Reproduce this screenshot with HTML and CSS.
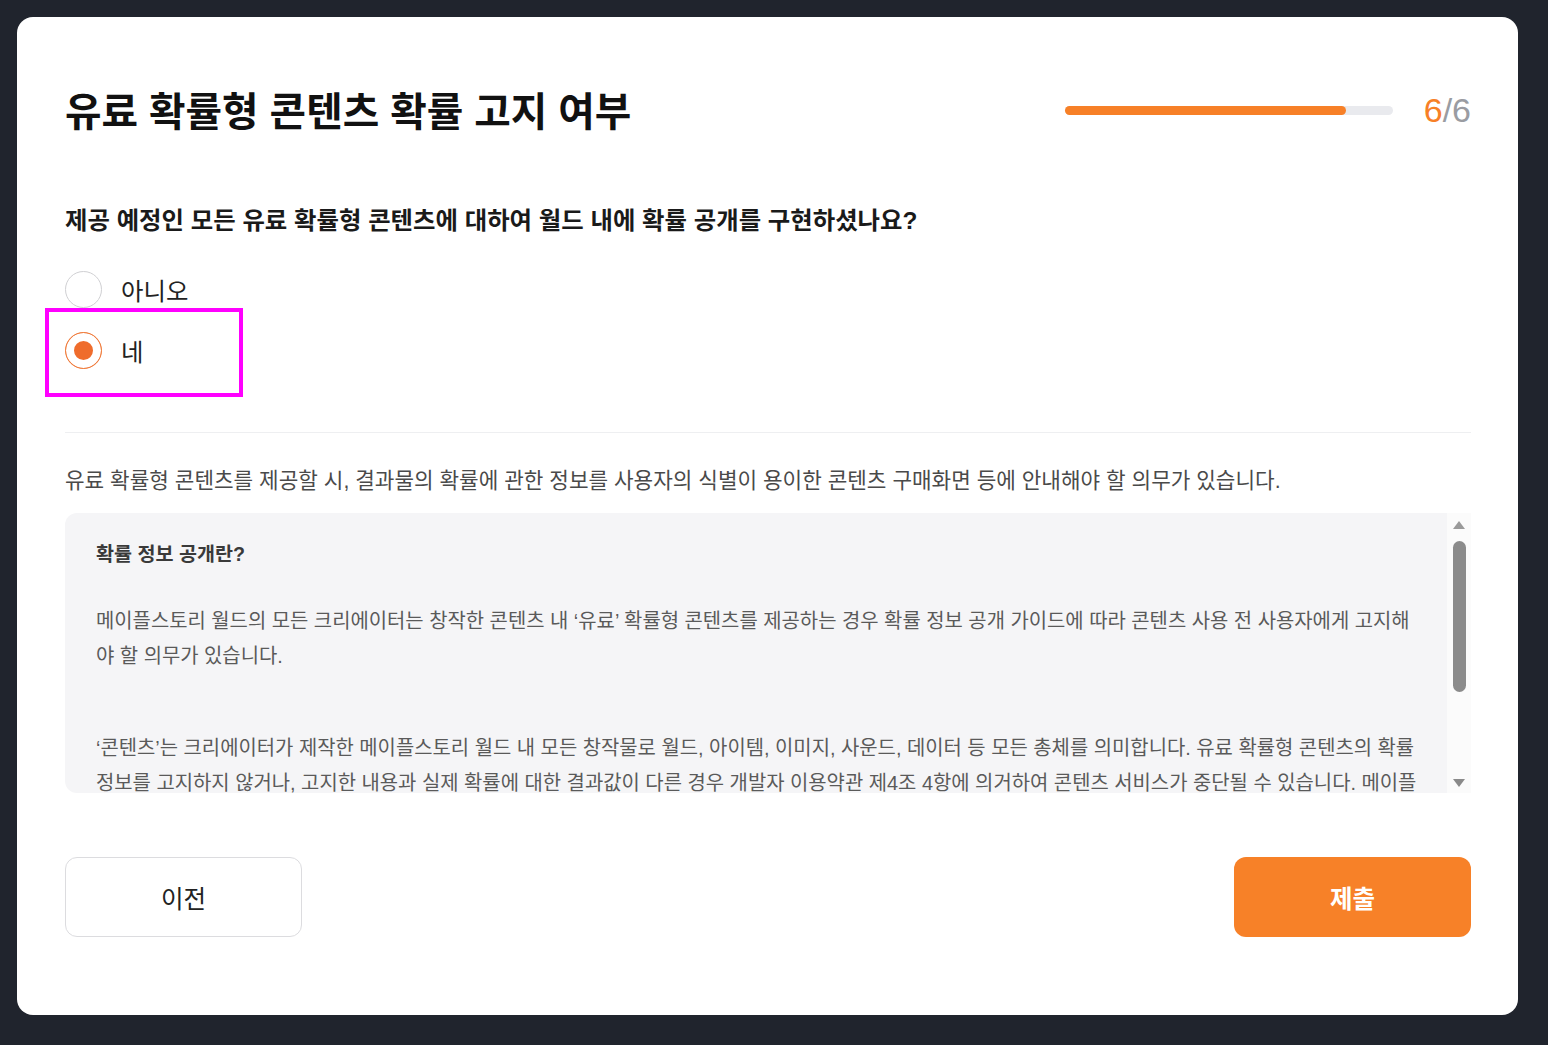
FILE: index.html
```html
<!DOCTYPE html>
<html lang="ko">

<head>
    <meta charset="UTF-8">
    <meta name="viewport" content="width=device-width, initial-scale=1.0">
    <title>유료 확률형 콘텐츠 확률 고지 여부</title>
    <link rel="stylesheet" href="styles.css">
</head>

<body>
    <!-- 설문 카드 -->
    <div class="card">
        <!-- 상단 제목 + 진행도 -->
        <div class="header">
            <h1 class="title">유료 확률형 콘텐츠 확률 고지 여부</h1>
            <div class="progress">
                <div class="progress-track">
                    <div class="progress-fill" style="width: 85.7%"></div>
                </div>
                <div class="progress-count"><span class="current">6</span>/6</div>
            </div>
        </div>

        <!-- 질문 -->
        <p class="question">제공 예정인 모든 유료 확률형 콘텐츠에 대하여 월드 내에 확률 공개를 구현하셨나요?</p>
        <div class="options">
            <label class="option">
                <input type="radio" name="notice" value="no">
                <span class="option-text">아니오</span>
            </label>
            <label class="option">
                <input type="radio" name="notice" value="yes" checked>
                <span class="option-text">네</span>
                <span class="highlight"></span>
            </label>
        </div>

        <div class="divider"></div>

        <!-- 안내 -->
        <p class="desc">유료 확률형 콘텐츠를 제공할 시, 결과물의 확률에 관한 정보를 사용자의 식별이 용이한 콘텐츠 구매화면 등에 안내해야 할 의무가 있습니다.</p>
        <div class="notice">
            <div class="notice-body">
                <h2 class="notice-title">확률 정보 공개란?</h2>
                <p class="notice-text">메이플스토리 월드의 모든 크리에이터는 창작한 콘텐츠 내 ‘유료’ 확률형 콘텐츠를 제공하는 경우 확률 정보 공개 가이드에 따라 콘텐츠 사용 전 사용자에게 고지해야 할 의무가 있습니다.</p>
                <p class="notice-text second">‘콘텐츠’는 크리에이터가 제작한 메이플스토리 월드 내 모든 창작물로 월드, 아이템, 이미지, 사운드, 데이터 등 모든 총체를 의미합니다. 유료 확률형 콘텐츠의 확률 정보를 고지하지 않거나, 고지한 내용과 실제 확률에 대한 결과값이 다른 경우 개발자 이용약관 제4조 4항에 의거하여 콘텐츠 서비스가 중단될 수 있습니다. 메이플스토리 월드 확률 정보 공개 가이드를 꼭 확인해 주세요.</p>
            </div>
            <!-- 스크롤바 -->
            <div class="scroll-rail">
                <span class="arrow-up"></span>
                <span class="thumb"></span>
                <span class="arrow-down"></span>
            </div>
        </div>

        <!-- 하단 버튼 -->
        <div class="actions">
            <button class="btn btn-prev">이전</button>
            <button class="btn btn-submit">제출</button>
        </div>
    </div>
</body>

</html>
```

FILE: styles.css
```css
* {
    padding: 0;
    margin: 0;
    box-sizing: border-box;
}

html {
    background: #20242d;
}

body {
    padding: 17px 30px 30px 17px;
    font-family: "Liberation Sans", "Noto Sans CJK KR", sans-serif;
    color: #222;
}

/* 카드 */
.card {
    background: #fff;
    border-radius: 16px;
    padding: 70px 47px 78px 48px;
}

.header {
    display: flex;
    align-items: center;
    justify-content: space-between;
    height: 50px;
}

.title {
    font-size: 39.7px;
    font-weight: 700;
    color: #111;
    line-height: 50px;
}

/* 진행도 */
.progress {
    display: flex;
    align-items: center;
    gap: 31px;
    margin-top: -4px;
}

.progress-track {
    width: 328px;
    height: 9px;
    border-radius: 5px;
    background: #e9eaee;
}

.progress-fill {
    height: 100%;
    border-radius: 5px;
    background: #f78027;
}

.progress-count {
    font-size: 34px;
    color: #9a9ca2;
    line-height: 40px;
}

.progress-count .current {
    color: #f78027;
}

/* 질문 */
.question {
    margin-top: 69px;
    font-size: 24.4px;
    font-weight: 700;
    line-height: 30px;
    color: #1a1a1a;
}

.options {
    margin-top: 33px;
    display: flex;
    flex-direction: column;
    gap: 21px;
}

.option {
    position: relative;
    display: flex;
    align-items: center;
    gap: 19px;
    height: 40px;
    cursor: pointer;
}

.option input {
    appearance: none;
    width: 37px;
    height: 37px;
    border-radius: 50%;
    border: 1.5px solid #d0d0d3;
    background: #fff;
    margin: 0;
}

.option input:checked {
    border: 1.5px solid #f07b3a;
    background: #ef6c2c;
    box-shadow: inset 0 0 0 8px #fff;
}

.option-text {
    font-size: 24.4px;
    color: #222;
}

/* 강조 박스 */
.highlight {
    position: absolute;
    left: -20px;
    top: -22px;
    width: 198px;
    height: 89px;
    border: 4px solid #ff00ff;
    pointer-events: none;
}

.divider {
    margin-top: 62px;
    height: 1px;
    background: #eeeff1;
}

/* 안내 */
.desc {
    margin-top: 34px;
    font-size: 21.3px;
    line-height: 28px;
    color: #4a4a4a;
}

.notice {
    margin-top: 18px;
    height: 280px;
    display: flex;
}

.notice-body {
    flex: 1;
    overflow: hidden;
    background: #f5f5f7;
    border-radius: 12px 0 0 12px;
    padding: 28px 27px 0 31px;
}

.notice-title {
    font-size: 19.6px;
    font-weight: 700;
    line-height: 26px;
    color: #3a3a3a;
}

.notice-text {
    margin-top: 37px;
    font-size: 19.9px;
    line-height: 35px;
    color: #5a5a5a;
}

.notice-text.second {
    margin-top: 57px;
}

/* 스크롤바 */
.scroll-rail {
    width: 24px;
    background: #fbfbfb;
    display: flex;
    flex-direction: column;
    align-items: center;
    padding: 8px 0 6px;
}

.arrow-up,
.arrow-down {
    width: 0;
    height: 0;
    border-left: 6px solid transparent;
    border-right: 6px solid transparent;
}

.arrow-up {
    border-bottom: 8px solid #9a9a9a;
}

.arrow-down {
    margin-top: auto;
    border-top: 8px solid #8a8a8a;
}

.thumb {
    margin-top: 12px;
    width: 13px;
    height: 151px;
    border-radius: 7px;
    background: #8b8b8b;
}

/* 버튼 */
.actions {
    margin-top: 64px;
    display: flex;
    justify-content: space-between;
}

.btn {
    width: 237px;
    height: 80px;
    border-radius: 12px;
    font-family: inherit;
    font-size: 24.5px;
    cursor: pointer;
}

.btn-prev {
    background: #fff;
    border: 1.5px solid #dcdcdf;
    color: #222;
}

.btn-submit {
    background: #f78128;
    border: none;
    color: #fff;
    font-weight: 700;
}
```
